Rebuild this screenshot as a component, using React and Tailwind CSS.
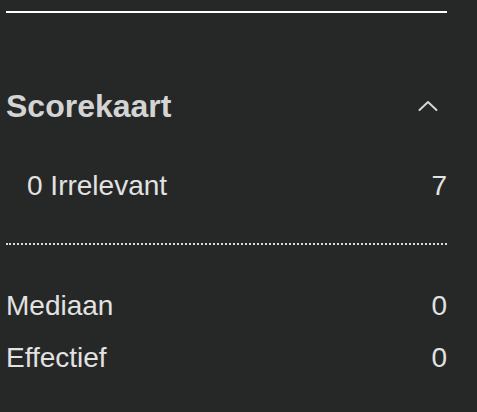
import React from 'react';

function ChevronUp() {
  return (
    <svg width="20" height="12" viewBox="0 0 20 12" fill="none" className="mr-[9px]">
      <polyline points="1.5,10 10,2 18.5,10" stroke="#d4d4d4" strokeWidth="2" strokeLinecap="round" strokeLinejoin="round" />
    </svg>
  );
}

function Row({ label, value, indent }) {
  return (
    <div className={`flex justify-between text-[28px] leading-[36px] text-[#e2e2e2] ${indent ? 'pl-[21px]' : ''}`}>
      <span>{label}</span>
      <span>{value}</span>
    </div>
  );
}

export default function App() {
  return (
    <div className="w-[477px] h-[412px] bg-[#262827] pt-[11px] pl-[6px] pr-[30px] overflow-hidden font-['Liberation_Sans',Arial,sans-serif]">
      <div className="h-[2px] bg-white" />
      <div className="mt-[75px] flex items-center justify-between">
        <h2 className="text-[32px] leading-[36px] font-bold text-[#d4d4d4]">Scorekaart</h2>
        <ChevronUp />
      </div>
      <div className="mt-[44px]">
        <Row label="0 Irrelevant" value="7" indent />
      </div>
      <div className="mt-[39px] border-t-2 border-dotted border-[#dcdcdc]" />
      <div className="mt-[43px] flex flex-col gap-[16px]">
        <Row label="Mediaan" value="0" />
        <Row label="Effectief" value="0" />
      </div>
    </div>
  );
}
